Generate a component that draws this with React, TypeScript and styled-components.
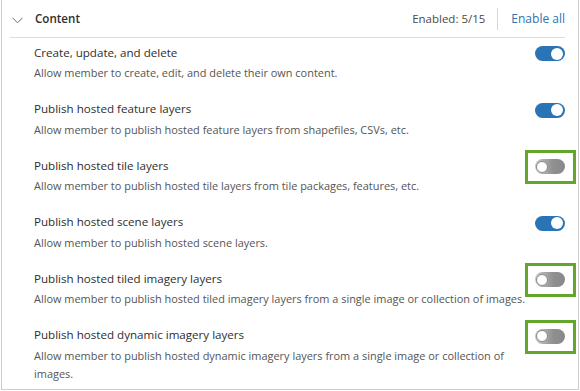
import React from "react";
import styled, { createGlobalStyle } from "styled-components";

const GlobalStyle = createGlobalStyle`
  html, body {
    margin: 0;
    padding: 0;
    background: #ffffff;
  }
  body {
    font-family: "Open Sans", "Lato", sans-serif;
    color: #323232;
  }
`;

const Panel = styled.div`
  box-sizing: border-box;
  width: 578px;
  height: 390px;
  margin-left: 1px;
  border: 1.5px solid #cdcdcd;
  border-top: none;
  padding: 0 13px 0 8px;
  overflow: hidden;
`;

const Header = styled.div`
  display: flex;
  align-items: center;
  height: 38px;
  border-bottom: 1px solid #dcdcdc;
  box-sizing: border-box;
`;

const Chevron = styled.span`
  display: flex;
  width: 12px;
  margin: 3px 11px 0 2px;
`;

const Title = styled.h3`
  flex: 1;
  margin: 0;
  font-size: 11.6px;
  font-weight: 600;
  color: #2e2e2e;
`;

const Count = styled.span`
  font-size: 11.5px;
  color: #4a4a4a;
  padding-right: 12px;
  border-right: 1px solid #d6d6d6;
  line-height: 22px;
`;

const EnableAll = styled.a`
  font-size: 12px;
  color: #2a74b5;
  padding-left: 13px;
  cursor: pointer;
`;

const Row = styled.div`
  position: relative;
  padding: 6px 0 12.6px 24px;
`;

const RowHead = styled.div`
  display: flex;
  align-items: center;
  height: 16px;
`;

const RowTitle = styled.div`
  flex: 1;
  font-size: 11.6px;
  color: #2e2e2e;
`;

const RowDesc = styled.div`
  margin-top: 4px;
  font-size: 10.95px;
  line-height: 18px;
  color: #555555;
  padding-right: 24px;
`;

const Track = styled.span<{ $on: boolean }>`
  position: relative;
  display: inline-block;
  width: 30px;
  height: 15px;
  margin-top: 3px;
  border-radius: 8px;
  box-sizing: border-box;
  background: ${(p) =>
    p.$on ? "#2a74b5" : "linear-gradient(90deg, #c8c8c8 0%, #909090 60%, #888888 100%)"};
`;

const Knob = styled.span<{ $on: boolean }>`
  position: absolute;
  top: 1.5px;
  left: ${(p) => (p.$on ? "16px" : "1px")};
  width: 12px;
  height: 12px;
  border-radius: 50%;
  background: #ffffff;
  box-sizing: border-box;
  border: ${(p) => (p.$on ? "none" : "1px solid #8a8a8a")};
`;

const Highlight = styled.span`
  position: absolute;
  top: -6px;
  right: -11px;
  width: 51px;
  height: 34px;
  box-sizing: border-box;
  border: 3px solid #64a52c;
`;

const ToggleWrap = styled.span`
  position: relative;
  display: inline-flex;
`;

type Privilege = {
  title: string;
  desc: string;
  on: boolean;
};

const privileges: Privilege[] = [
  {
    title: "Create, update, and delete",
    desc: "Allow member to create, edit, and delete their own content.",
    on: true,
  },
  {
    title: "Publish hosted feature layers",
    desc: "Allow member to publish hosted feature layers from shapefiles, CSVs, etc.",
    on: true,
  },
  {
    title: "Publish hosted tile layers",
    desc: "Allow member to publish hosted tile layers from tile packages, features, etc.",
    on: false,
  },
  {
    title: "Publish hosted scene layers",
    desc: "Allow member to publish hosted scene layers.",
    on: true,
  },
  {
    title: "Publish hosted tiled imagery layers",
    desc: "Allow member to publish hosted tiled imagery layers from a single image or collection of images.",
    on: false,
  },
  {
    title: "Publish hosted dynamic imagery layers",
    desc: "Allow member to publish hosted dynamic imagery layers from a single image or collection of images.",
    on: false,
  },
];

const Toggle = ({ on }: { on: boolean }) => (
  <ToggleWrap>
    <Track $on={on}>
      <Knob $on={on} />
    </Track>
    {!on && <Highlight />}
  </ToggleWrap>
);

export default function App() {
  return (
    <>
      <GlobalStyle />
      <Panel>
        <Header>
          <Chevron>
            <svg width="11" height="7" viewBox="0 0 11 7" fill="none">
              <path d="M0.5 0.8L5.5 5.8L10.5 0.8" stroke="#6a6a6a" strokeWidth="1" />
            </svg>
          </Chevron>
          <Title>Content</Title>
          <Count>Enabled: 5/15</Count>
          <EnableAll>Enable all</EnableAll>
        </Header>
        {privileges.map((p) => (
          <Row key={p.title}>
            <RowHead>
              <RowTitle>{p.title}</RowTitle>
              <Toggle on={p.on} />
            </RowHead>
            <RowDesc>{p.desc}</RowDesc>
          </Row>
        ))}
      </Panel>
    </>
  );
}
